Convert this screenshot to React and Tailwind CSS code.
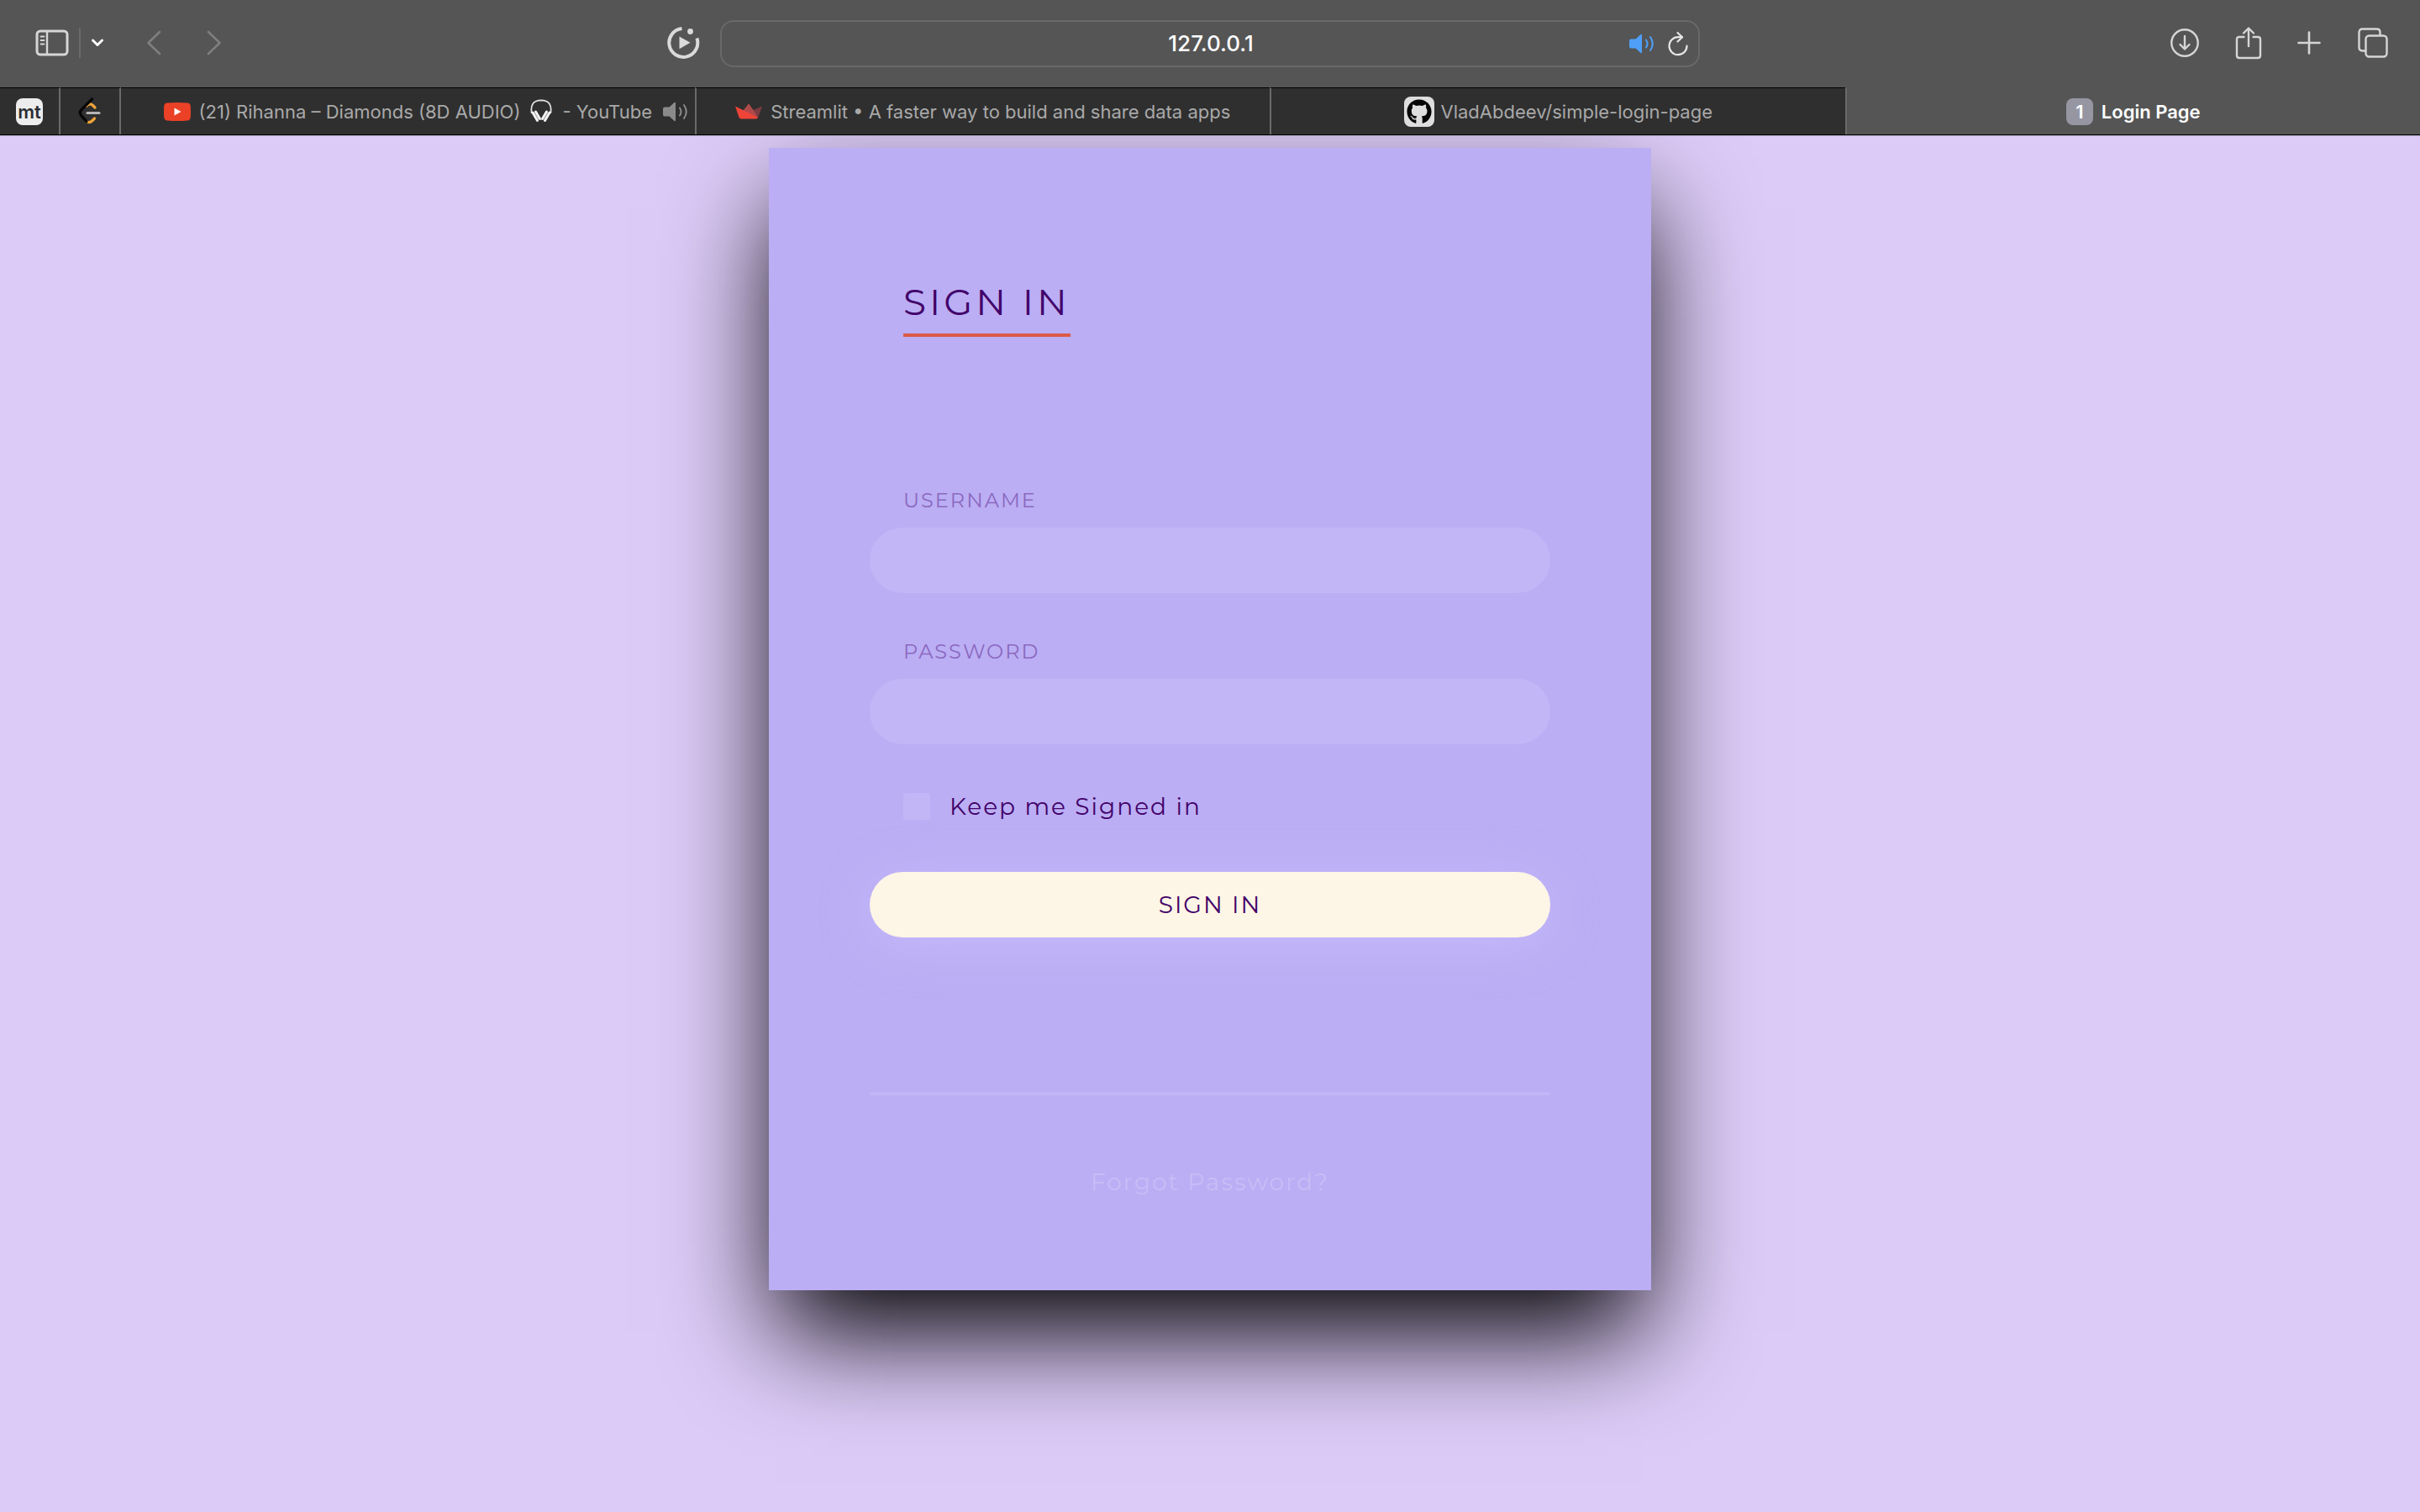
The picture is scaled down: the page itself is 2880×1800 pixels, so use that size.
import React from "react";
import { FaGithub } from "react-icons/fa";

const iconButton = "flex items-center justify-center text-[#d6d6d6]";

function SidebarIcon() {
  return (
    <svg width="40" height="32" viewBox="0 0 40 32" fill="none" stroke="currentColor" strokeLinecap="round">
      <rect x="2" y="2" width="36" height="28" rx="4" strokeWidth="3" />
      <path d="M14 2v28" strokeWidth="2.4" strokeLinecap="butt" />
      <path d="M6.5 8.5h4M6.5 13h4M6.5 17.5h4" strokeWidth="1.8" />
    </svg>
  );
}

function Speaker({ className }) {
  return (
    <svg className={className} width="30" height="24" viewBox="0 0 30 24" fill="none" stroke="currentColor" strokeLinecap="round">
      <path d="M2 6.5h5.500l6-5.500q1.500-1 1.500 1v20q0 2-1.500 1l-6-5.500H2Q0 17.500 0 15.500V8.500Q0 6.500 2 6.500z" fill="currentColor" stroke="none" />
      <path d="M20 7.500q3 4.500 0 9M25 4q5.500 8 0 16" strokeWidth="2" />
    </svg>
  );
}

function PlayRingIcon() {
  return (
    <svg width="40" height="40" viewBox="0 0 40 40" fill="none">
      <path d="M18.500 3A17 17 0 1 0 36.400 14.500" stroke="currentColor" strokeWidth="4" />
      <circle cx="28.500" cy="6.500" r="3.400" fill="currentColor" />
      <path d="M15.500 12.500l13 7.200-13 7.500z" fill="currentColor" />
    </svg>
  );
}

function ReloadIcon() {
  return (
    <svg width="24" height="30" viewBox="0 0 24 30" fill="none" stroke="#e6e6e6" strokeWidth="2.200" strokeLinecap="round" strokeLinejoin="round">
      <path d="M17 7.200H12A10.500 10.500 0 1 0 22.500 17.500" />
      <path d="M11.500 2l5.500 5.200-5.500 5.300" />
    </svg>
  );
}

function DownloadIcon() {
  return (
    <svg width="36" height="36" viewBox="0 0 36 36" fill="none" stroke="currentColor" strokeWidth="2.400" strokeLinecap="round" strokeLinejoin="round">
      <circle cx="18" cy="18" r="15.700" />
      <path d="M18 10v15M12.500 20l5.500 5.500 5.500-5.500" />
    </svg>
  );
}

function ShareIcon() {
  return (
    <svg width="32" height="40" viewBox="0 0 32 40" fill="none" stroke="currentColor" strokeWidth="2.400" strokeLinecap="round" strokeLinejoin="round">
      <path d="M10.500 13H5q-3 0-3 3v19q0 3 3 3h22q3 0 3-3V16q0-3-3-3h-5.500" />
      <path d="M16 24V3M10 8.500L16 2.500l6 6" />
    </svg>
  );
}

function PlusIcon() {
  return (
    <svg width="28" height="28" viewBox="0 0 28 28" fill="none" stroke="currentColor" strokeWidth="2.600" strokeLinecap="round">
      <path d="M14 1.500v25M1.500 14h25" />
    </svg>
  );
}

function TabsIcon() {
  return (
    <svg width="36" height="36" viewBox="0 0 36 36" fill="none" stroke="currentColor" strokeWidth="2.400">
      <path d="M9 27.500H5.500q-4 0-4-4v-18q0-4 4-4h17q4 0 4 4V9" />
      <rect x="9.500" y="9.500" width="25" height="25" rx="4" />
    </svg>
  );
}

function LeetCodeIcon() {
  return (
    <svg width="28" height="34" viewBox="0 0 28 34" fill="none" strokeWidth="3.200" strokeLinecap="round">
      <path d="M10 10q4-4 7.500-.5L20 12M19.500 25l-2.500 2.500Q13.500 31 10 28.500" stroke="#f0a43a" />
      <path d="M16.500 2L4 14.500q-3.500 3.500 0 7.500l6 6.500" stroke="#050505" />
      <path d="M11 18.500h14" stroke="#b4b4b4" />
    </svg>
  );
}

function YouTubeIcon() {
  return (
    <svg width="32" height="24" viewBox="0 0 32 24">
      <path d="M4 1.500Q16 .5 28 1.500q3.500.3 3.800 4 .4 6.500 0 13-.3 3.700-3.800 4-12 1-24 0-3.500-.3-3.800-4-.4-6.500 0-13 .3-3.700 3.800-4z" fill="#eb4127" />
      <path d="M12.500 7.500v9l8-4.500z" fill="#fff" />
    </svg>
  );
}

function StreamlitIcon() {
  return (
    <svg width="32" height="20" viewBox="0 0 32 20">
      <path d="M32 3.500L20 8.500l7.500 8z" fill="#7b3b40" />
      <path d="M16 .5L9 9l18 8z" fill="#b04a4a" />
      <path d="M16 .5l6.500 9 4.500 7.500-16-8z" fill="#b04a4a" />
      <path d="M0 3.500l27 13.300q-.5 1.700-2 1.700H7q-1.800 0-2.500-1.800z" fill="#ee4438" />
    </svg>
  );
}

function Headphones() {
  return (
    <svg className="mx-3 inline-block align-[-5px]" width="26" height="28" viewBox="0 0 26 28" fill="none" role="img" aria-label="headphones">
      <path d="M1.800 17Q-1 1.600 13 1.400 27 1.600 24.200 17" stroke="#dfe2e2" strokeWidth="1.800" />
      <path d="M3 16l5.500 9.500M6.500 15l5 8.500" stroke="#f4f4f4" strokeWidth="3" strokeLinecap="round" />
      <path d="M23 16l-5.500 9.500M19.500 15l-5 8.500" stroke="#f4f4f4" strokeWidth="3" strokeLinecap="round" />
      <path d="M5 15.500l5 9M21 15.500l-5 9" stroke="#b4b8b8" strokeWidth="1" />
    </svg>
  );
}

function Toolbar() {
  return (
    <div className="flex h-[104px] items-center">
      <div className="flex flex-1 items-center pr-6 pb-[2px] pl-[42px]">
        <button aria-label="Show sidebar" className={iconButton}><SidebarIcon /></button>
        <div className="mx-3 h-9 w-[2px] bg-[#6a6a6a]" />
        <button aria-label="Tab groups" className="flex text-white">
          <svg width="16" height="12" viewBox="0 0 16 12" fill="none" stroke="currentColor" strokeWidth="3" strokeLinecap="round" strokeLinejoin="round">
            <path d="M2.500 3L8 8.500 13.500 3" />
          </svg>
        </button>
        <button aria-label="Back" className="ml-12 flex text-[#7f7f7f]">
          <svg width="20" height="30" viewBox="0 0 20 30" fill="none" stroke="currentColor" strokeWidth="2.600" strokeLinecap="round" strokeLinejoin="round">
            <path d="M18 2L4.500 15 18 28" />
          </svg>
        </button>
        <button aria-label="Forward" className="ml-[52px] flex text-[#7f7f7f]">
          <svg width="20" height="30" viewBox="0 0 20 30" fill="none" stroke="currentColor" strokeWidth="2.600" strokeLinecap="round" strokeLinejoin="round">
            <path d="M4 2l13.500 13L4 28" />
          </svg>
        </button>
        <button aria-label="Media controls" className="ml-auto flex text-[#dadada]"><PlayRingIcon /></button>
      </div>
      <div className="flex h-14 w-[40.5%] items-center rounded-2xl border-2 border-[#696969] pr-3">
        <div className="w-[84px]" />
        <input
          aria-label="Address"
          defaultValue="127.0.0.1"
          className="min-w-0 flex-1 bg-transparent text-center text-[26px] leading-8 font-medium text-white outline-none"
        />
        <button aria-label="Mute tab" className="mr-4 flex text-[#4f9ff8]"><Speaker /></button>
        <button aria-label="Reload" className="flex"><ReloadIcon /></button>
      </div>
      <div className="flex flex-1 items-center justify-end pr-[38px] pb-[2px] pl-7">
        <button aria-label="Downloads" className={iconButton}><DownloadIcon /></button>
        <button aria-label="Share" className={`${iconButton} ml-[42px]`}><ShareIcon /></button>
        <button aria-label="New tab" className={`${iconButton} ml-[42px]`}><PlusIcon /></button>
        <button aria-label="Tab overview" className={`${iconButton} ml-11`}><TabsIcon /></button>
      </div>
    </div>
  );
}

const tabBase = "relative flex h-14 items-center justify-center border-t";
const idleTab = "border-t-black bg-[#2f2f2f] text-[#a9a9a9]";

function TabBar() {
  return (
    <nav aria-label="Tabs" className="flex border-b border-black text-[22px] leading-7">
      <button aria-label="Monkeytype" className={`${tabBase} ${idleTab} w-[72px] border-r-2 border-r-[#6a6a6a]`}>
        <span className="flex size-8 items-center justify-center rounded-lg bg-[#ededed] text-[22px] leading-7 font-semibold text-[#2c2e31]">mt</span>
      </button>
      <button aria-label="LeetCode" className={`${tabBase} ${idleTab} w-[72px] border-r-2 border-r-[#6a6a6a]`}>
        <LeetCodeIcon />
      </button>
      <button className={`${tabBase} ${idleTab} min-w-0 flex-1 gap-[10px]`}>
        <YouTubeIcon />
        <span className="whitespace-nowrap">(21) Rihanna – Diamonds (8D AUDIO)<Headphones />- YouTube</span>
        <Speaker className="absolute right-2 text-[#8a8a8a]" />
      </button>
      <button className={`${tabBase} ${idleTab} min-w-0 flex-1 gap-[10px] border-l-2 border-l-[#6a6a6a]`}>
        <StreamlitIcon />
        <span className="whitespace-nowrap">Streamlit • A faster way to build and share data apps</span>
      </button>
      <button className={`${tabBase} ${idleTab} min-w-0 flex-1 gap-2 border-l-2 border-l-[#6a6a6a]`}>
        <span className="flex size-9 items-center justify-center rounded-lg bg-[#dedede]">
          <FaGithub size={30} color="#050505" />
        </span>
        <span className="whitespace-nowrap">VladAbdeev/simple-login-page</span>
      </button>
      <button aria-current="page" className={`${tabBase} min-w-0 flex-1 gap-[10px] border-t-[#555555] border-l-2 border-l-[#6a6a6a] font-semibold text-white`}>
        <span className="flex size-8 items-center justify-center rounded-lg bg-[#9696a3]">1</span>
        <span className="whitespace-nowrap">Login Page</span>
      </button>
    </nav>
  );
}

function Field({ id, label, type }) {
  return (
    <div className="flex flex-col">
      <label htmlFor={id} className="pl-10 text-[24px] leading-7 tracking-[2px] text-[#8b69c0]">{label}</label>
      <input id={id} type={type} className="mt-[18px] h-[78px] w-full rounded-full bg-[#c2b6f6] px-10 text-[28px] text-[#420169] outline-none" />
    </div>
  );
}

export default function App() {
  return (
    <div className="flex min-h-screen flex-col overflow-hidden bg-[#dccbf7] font-['Inter','Liberation_Sans',sans-serif]">
      <header className="relative z-10 border-b border-[#a99fbb] bg-[#555555]">
        <Toolbar />
        <TabBar />
      </header>
      <main className="flex justify-center pt-[14px] pb-8">
        <form
          onSubmit={(e) => e.preventDefault()}
          className="flex w-full max-w-[1050px] flex-col bg-[#bbaef4] px-[120px] pt-[156px] pb-28 font-['Montserrat','Inter',sans-serif] text-[#420169] shadow-[0_60px_120px_-10px_#000]"
        >
          <h1 className="ml-10 self-start border-b-4 border-[#dc5a46] pb-[11px] text-[44px] leading-[54px] tracking-[4px]">SIGN IN</h1>
          <div className="mt-[181px] flex flex-col gap-14">
            <Field id="username" label="USERNAME" type="text" />
            <Field id="password" label="PASSWORD" type="password" />
          </div>
          <div className="mt-[58px] flex items-center pl-10">
            <input id="keep" type="checkbox" className="size-8 appearance-none rounded-[3px] bg-[#c2b6f6]" />
            <label htmlFor="keep" className="pl-[23px] text-[28px] leading-8 tracking-[2px]">Keep me Signed in</label>
          </div>
          <button type="submit" className="mt-[62px] h-[78px] rounded-full bg-[#fdf5e6] text-[28px] leading-8 tracking-[2px] shadow-[0_8px_60px_rgba(202,190,255,0.7)]">SIGN IN</button>
          <hr className="mt-[184px] border-0 border-t-4 border-[#c2b6f6]" />
          <a href="#forgot" className="mt-[86px] self-center text-[28px] leading-[34px] tracking-[2px] text-[#c8bdf7]">Forgot Password?</a>
        </form>
      </main>
    </div>
  );
}
